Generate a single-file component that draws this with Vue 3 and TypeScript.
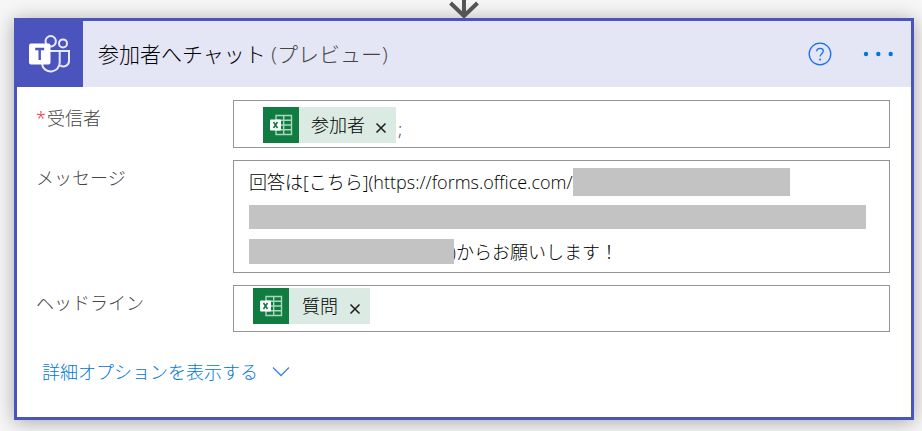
<script setup lang="ts">
import { ref } from 'vue'

interface Token {
  id: number
  label: string
}

const recipients = ref<Token[]>([{ id: 1, label: '参加者' }])
const headline = ref<Token[]>([{ id: 2, label: '質問' }])
const recipientDraft = ref('')
const headlineDraft = ref('')

function removeToken(list: Token[], id: number): void {
  const index = list.findIndex((token) => token.id === id)
  if (index >= 0) list.splice(index, 1)
}
</script>

<template>
  <main class="canvas">
    <svg class="connector" viewBox="0 0 30 18" aria-hidden="true">
      <path d="M15 0V15M1.500 3L15 16L28.500 3" />
    </svg>

    <section class="card">
      <header class="card-header">
        <div class="brand">
          <svg viewBox="0 0 66 66" aria-hidden="true">
            <g class="brand-line">
              <circle cx="33.7" cy="20.3" r="5.2" />
              <circle cx="46" cy="22.4" r="4" />
              <path d="M33 30H42.7V41.6A8.9 8.9 0 0 1 25 43" />
              <path d="M42 30H52V39.2A5.6 5.6 0 0 1 43.2 44.4" />
            </g>
            <rect class="brand-tile" x="12" y="22.5" width="21.5" height="21" rx="2" />
            <path class="brand-t" d="M18.2 28H27.2M22.7 28V39" />
          </svg>
        </div>
        <h1 class="title">参加者へチャット <span class="preview">(プレビュー)</span></h1>
        <button class="icon-button help" type="button" aria-label="ヘルプ">
          <svg viewBox="0 0 24 24" aria-hidden="true">
            <circle cx="12" cy="12" r="10.8" />
            <path d="M8.7 9.3C8.8 7.3 10.2 6.3 12 6.3C14 6.3 15.3 7.4 15.3 9.1C15.3 11.8 12.1 11.7 12.1 14.6" />
            <circle class="dot" cx="12.1" cy="17.4" r="1" />
          </svg>
        </button>
        <button class="icon-button more" type="button" aria-label="メニュー">
          <svg viewBox="0 0 32 8" aria-hidden="true">
            <circle class="dot" cx="4" cy="4" r="2.2" />
            <circle class="dot" cx="16.300" cy="4" r="2.2" />
            <circle class="dot" cx="28.700" cy="4" r="2.2" />
          </svg>
        </button>
      </header>

      <form class="fields" @submit.prevent>
        <label class="label" for="recipient"><span class="required">*</span>受信者</label>
        <div class="box token-box recipients">
          <template v-for="token in recipients" :key="token.id">
            <span class="token">
              <svg class="excel" viewBox="0 0 36 36" aria-hidden="true">
                <path class="sheet" d="M13 8.500H28.500V27.500H13ZM13 13.200H28.500M13 18H28.500M13 22.700H28.500M20.700 8.500V27.500" />
                <rect class="badge" x="7" y="12.500" width="11" height="11" rx="1" />
                <path class="cross" d="M10.500 15L14.500 21M14.500 15L10.500 21" />
              </svg>
              <span class="token-text">{{ token.label }}</span>
              <button class="remove" type="button" :aria-label="token.label" @click="removeToken(recipients, token.id)">
                <svg viewBox="0 0 12 12" aria-hidden="true"><path d="M1.500 1.500L10.500 10.500M10.500 1.500L1.500 10.500" /></svg>
              </button>
            </span>
            <span class="separator">;</span>
          </template>
          <input id="recipient" v-model="recipientDraft" class="draft" type="text" />
        </div>

        <span id="message-label" class="label">メッセージ</span>
        <div class="box message" contenteditable="true" role="textbox" aria-multiline="true" aria-labelledby="message-label" spellcheck="false">
          <div class="line">回答は[こちら](https://forms.office.com/<span class="mask mask-a"></span></div>
          <div class="line"><span class="mask mask-b"></span></div>
          <div class="line"><span class="mask mask-c"></span><span class="tail">)からお願いします！</span></div>
        </div>

        <label class="label" for="headline">ヘッドライン</label>
        <div class="box token-box headline">
          <span v-for="token in headline" :key="token.id" class="token">
            <svg class="excel" viewBox="0 0 36 36" aria-hidden="true">
              <path class="sheet" d="M13 8.500H28.500V27.500H13ZM13 13.200H28.500M13 18H28.500M13 22.700H28.500M20.700 8.500V27.500" />
              <rect class="badge" x="7" y="12.500" width="11" height="11" rx="1" />
              <path class="cross" d="M10.500 15L14.500 21M14.500 15L10.500 21" />
            </svg>
            <span class="token-text">{{ token.label }}</span>
            <button class="remove" type="button" :aria-label="token.label" @click="removeToken(headline, token.id)">
              <svg viewBox="0 0 12 12" aria-hidden="true"><path d="M1.500 1.500L10.500 10.500M10.500 1.500L1.500 10.500" /></svg>
            </button>
          </span>
          <input id="headline" v-model="headlineDraft" class="draft" type="text" />
        </div>
      </form>

      <button class="advanced" type="button">
        詳細オプションを表示する
        <svg viewBox="0 0 18 12" aria-hidden="true"><path d="M1 1.500L9 9.500L17 1.500" /></svg>
      </button>
    </section>
  </main>
</template>

<style>
body {
  margin: 0;
  background: #f6f6f6;
}
</style>

<style scoped>
.canvas {
  display: flex;
  flex-direction: column;
  padding: 0 8px 11px 14px;
  overflow: hidden;
  font-family: "Open Sans", "Noto Sans CJK JP", sans-serif;
  font-size: 18px;
  font-weight: 300;
  line-height: 24px;
  color: #000;
}

svg {
  display: block;
  fill: none;
}

button {
  padding: 0;
  border: 0;
  background: none;
  font: inherit;
  cursor: pointer;
}

.connector {
  z-index: 1;
  align-self: center;
  width: 30px;
  height: 18px;
  stroke: #555;
  stroke-width: 4;
}

.card {
  border: 3px solid #4b53bc;
  background: #fff;
  box-shadow: 0 2px 18px rgba(0, 0, 0, 0.32);
}

.card-header {
  display: flex;
  align-items: center;
  padding-right: 17px;
  background: #e4e5f5;
}

.brand {
  width: 66px;
  height: 66px;
  background: #4b53bc;
}

.brand-line {
  stroke: #e9eafa;
  stroke-width: 2;
}

.brand-tile {
  fill: #fff;
}

.brand-t {
  stroke: #4b53bc;
  stroke-width: 2.4;
}

.title {
  flex: 1;
  margin: 0;
  padding-left: 15px;
  font-size: 21px;
  font-weight: 300;
  line-height: 32px;
}

.preview {
  color: #444;
}

.icon-button {
  stroke: #146ff5;
  stroke-width: 1.3;
}

.help {
  width: 24px;
}

.help .dot {
  fill: #146ff5;
  stroke: none;
}

.more {
  width: 32px;
  margin-left: 30px;
}

.more .dot {
  fill: #0078d7;
  stroke: none;
}

.fields {
  display: grid;
  grid-template-columns: 197px minmax(0, 1fr);
  row-gap: 12px;
  padding: 13px 21px 0 19px;
}

.label {
  padding-top: 6px;
  color: #444;
}

.required {
  margin-right: 1px;
  color: #e8112d;
}

.box {
  box-sizing: border-box;
  border: 1px solid #949494;
  background: #fff;
}

.token-box {
  display: flex;
  align-items: flex-start;
}

.recipients {
  min-height: 48px;
  padding: 6px 16px 4px 29px;
}

.headline {
  min-height: 47px;
  padding: 2px 16px 4px 19px;
}

.token {
  display: flex;
  align-items: center;
  box-sizing: border-box;
  min-width: 117px;
  height: 36px;
  padding-right: 9px;
  background: #dbeae2;
}

.excel {
  width: 36px;
  height: 36px;
  background: #107c41;
}

.sheet {
  stroke: #a9d8bd;
  stroke-width: 1.4;
}

.badge {
  fill: #fff;
}

.cross {
  stroke: #107c41;
  stroke-width: 1.6;
}

.token-text {
  flex: 1;
  padding: 0 10px 0 12px;
  text-align: center;
}

.remove {
  width: 12px;
  padding-top: 6px;
  stroke: #222;
  stroke-width: 1.6;
}

.separator {
  padding: 10px 0 0 2px;
  color: #444;
}

.draft {
  flex: 1;
  min-width: 0;
  height: 36px;
  padding: 0;
  border: 0;
  outline: 0;
  background: transparent;
  font: inherit;
}

.message {
  padding: 3px 15px;
  outline: 0;
}

.line {
  display: flex;
  align-items: center;
  height: 35px;
  white-space: nowrap;
}

.mask {
  background: #c3c3c3;
}

.mask-a {
  width: 217px;
  height: 28px;
}

.mask-b {
  width: 617px;
  height: 24px;
}

.mask-c {
  z-index: 1;
  width: 205px;
  height: 25px;
  margin-right: -3px;
}

.advanced {
  display: flex;
  align-items: center;
  gap: 14px;
  margin: 28px 0 33px 25px;
  color: #0078d7;
}

.advanced svg {
  width: 18px;
  height: 12px;
  stroke: #3b82f0;
  stroke-width: 1.3;
}
</style>
